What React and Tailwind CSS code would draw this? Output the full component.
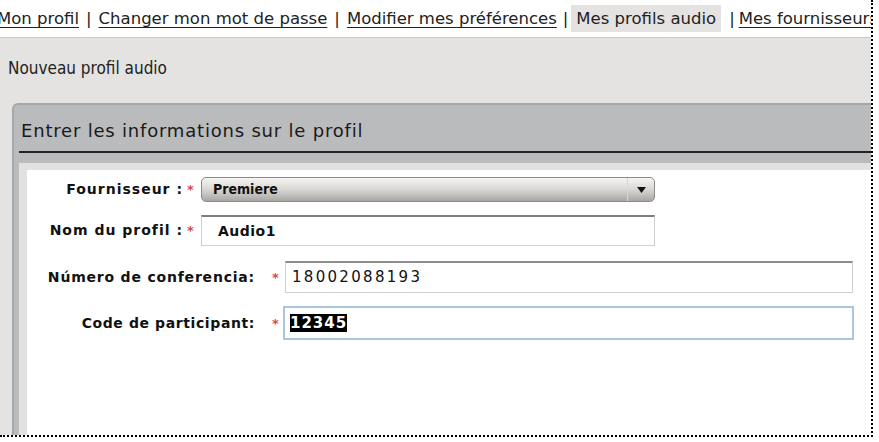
import React from "react";

const navLinks = ["Mon profil", "Changer mon mot de passe", "Modifier mes préférences"];

function Label({ children, width, track }) {
  return (
    <div
      className={`shrink-0 text-right text-[14px] font-bold text-[#111] ${track}`}
      style={{ width }}
    >
      {children}
    </div>
  );
}

function Star({ left, right }) {
  return (
    <span
      className="flex w-[7px] shrink-0 justify-center text-[13px] font-bold leading-none text-[#d44a4a]"
      style={{ marginLeft: left, marginRight: right }}
    >
      *
    </span>
  );
}

export default function App() {
  return (
    <div className="h-[442px] w-[879px] overflow-hidden bg-white font-['DejaVu_Sans',sans-serif]">
      <div className="flex h-[437px] w-[873px] flex-col overflow-hidden border-r-2 border-b-2 border-dotted border-black">
        {/* liens du haut */}
        <div className="flex h-[37px] shrink-0 items-start whitespace-nowrap pt-[5px] text-[16.5px] text-[#222]">
          <div className="-ml-[3px] flex items-center leading-[27px]">
            {navLinks.map((l, i) => (
              <span key={l} className="flex items-center">
                <span className="underline underline-offset-[3px]">{l}</span>
                <span className={i < 2 ? "mx-[7px]" : "ml-[6px] mr-[3px]"}>|</span>
              </span>
            ))}
            <span className="bg-[#e4e3e1] px-[5px]">Mes profils audio</span>
            <span className="ml-[8px] mr-[4px]">|</span>
            <span className="underline underline-offset-[3px]">Mes fournisseurs</span>
          </div>
        </div>

        <div className="flex flex-1 flex-col border-t border-[#c9c8c6] bg-[#e4e3e1]">
          <div className="flex h-[65px] shrink-0 items-center pb-[4px] pl-[8px] font-['DejaVu_Sans_Condensed','DejaVu_Sans',sans-serif] text-[17px] text-[#222]">
            Nouveau profil audio
          </div>

          {/* panneau */}
          <div className="ml-[12px] flex flex-1 flex-col rounded-tl-[6px] border-t-2 border-l-2 border-[#a5a7a9] bg-[#b9bbbd] pl-[5px]">
            <div className="flex h-[46px] shrink-0 items-center pl-[2px] pt-[5px] text-[18px] tracking-[0.8px] text-[#1a1a1a]">
              Entrer les informations sur le profil
            </div>
            <div className="h-[2px] shrink-0 bg-[#222]" />
            <div className="h-[10px] shrink-0" />
            <div className="flex flex-1 flex-col border-t-[7px] border-l-[8px] border-[#e2e1df] bg-white pt-[7px]">
              <div className="flex items-center">
                <Label width={156} track="tracking-[1px]">Fournisseur :</Label>
                <Star left={4} right={7} />
                <div className="flex h-[25px] w-[454px] items-center rounded-[5px] border border-[#8d8b88] bg-gradient-to-b from-[#f6f5f3] via-[#d9d7d3] to-[#a9a7a3]">
                  <span className="flex-1 pl-[11px] font-['DejaVu_Sans_Condensed','DejaVu_Sans',sans-serif] text-[14px] font-bold text-[#111]">
                    Premiere
                  </span>
                  <div className="flex h-full w-[27px] items-center justify-center border-l border-[#d8d6d2]">
                    <svg width="9" height="6" viewBox="0 0 9 6">
                      <path d="M0 0 L9 0 L4.5 6 Z" fill="#111" />
                    </svg>
                  </div>
                </div>
              </div>

              <div className="mt-[13px] flex items-center">
                <Label width={156} track="tracking-[1px]">Nom du profil :</Label>
                <Star left={4} right={7} />
                <div className="flex h-[31px] w-[454px] items-center border border-t-2 border-[#cfcfcf] border-t-[#7d7d7d] pl-[16px] text-[14px] font-bold tracking-[0.5px] text-[#111]">
                  Audio1
                </div>
              </div>

              <div className="mt-[15px] flex items-center">
                <Label width={228} track="tracking-[0.8px]">Número de conferencia:</Label>
                <Star left={17} right={6} />
                <div className="flex h-[32px] w-[568px] items-center border border-t-2 border-[#cfcfcf] border-t-[#8d8d8d] pl-[6px] text-[15px] tracking-[2.3px] text-[#111]">
                  18002088193
                </div>
              </div>

              <div className="mt-[13px] flex items-center">
                <Label width={228} track="tracking-[0.6px]">Code de participant:</Label>
                <Star left={17} right={4} />
                <div className="flex h-[34px] w-[571px] items-center border-2 border-[#a9c6de] pl-[5px] text-[15px] font-bold tracking-[1px]">
                  <span className="bg-black leading-[18px] text-white">12345</span>
                </div>
              </div>
            </div>
          </div>
        </div>
      </div>
    </div>
  );
}
